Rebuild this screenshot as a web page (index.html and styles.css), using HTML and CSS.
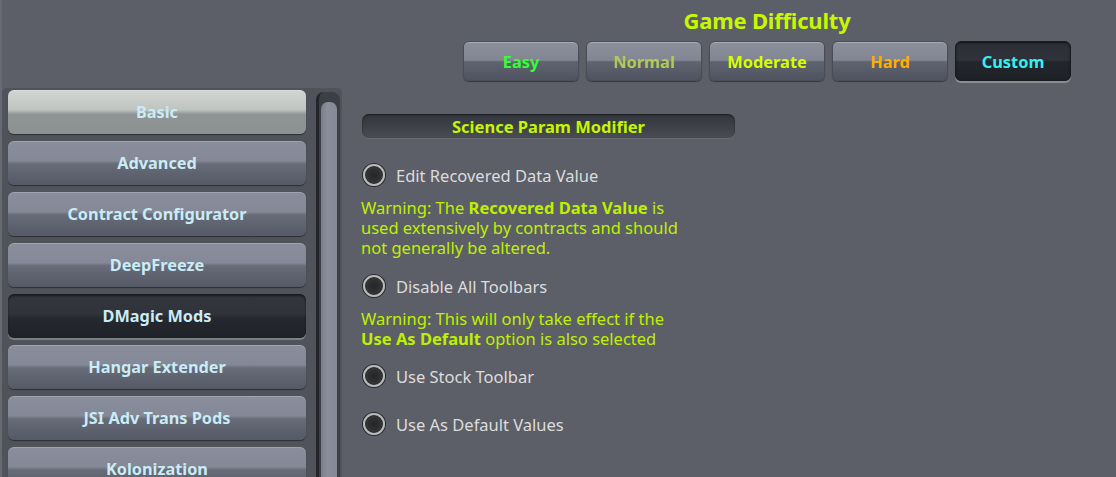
FILE: index.html
```html
<!DOCTYPE html>
<html>
<head>
<meta charset="utf-8">
<link rel="stylesheet" href="styles.css">
</head>
<body>
<div class="screen">
  <header class="difficulty">
    <h1 class="diff-title">Game Difficulty</h1>
    <div class="diff-buttons">
      <div class="diff-btn easy">Easy</div>
      <div class="diff-btn normal">Normal</div>
      <div class="diff-btn moderate">Moderate</div>
      <div class="diff-btn hard">Hard</div>
      <div class="diff-btn custom active">Custom</div>
    </div>
  </header>
  <div class="main">
    <aside class="list-panel">
      <div class="list">
        <div class="list-btn highlight">Basic</div>
        <div class="list-btn">Advanced</div>
        <div class="list-btn">Contract Configurator</div>
        <div class="list-btn">DeepFreeze</div>
        <div class="list-btn selected">DMagic Mods</div>
        <div class="list-btn">Hangar Extender</div>
        <div class="list-btn">JSI Adv Trans Pods</div>
        <div class="list-btn">Kolonization</div>
      </div>
      <div class="scroll-track"><div class="scroll-thumb"></div></div>
    </aside>
    <section class="content">
      <div class="section-bar">Science Param Modifier</div>
      <div class="option first"><span class="radio"></span><span class="opt-label">Edit Recovered Data Value</span></div>
      <p class="warning w1">Warning: The <b>Recovered Data Value</b> is<br>used extensively by contracts and should<br>not generally be altered.</p>
      <div class="option o2"><span class="radio"></span><span class="opt-label">Disable All Toolbars</span></div>
      <p class="warning w2">Warning: This will only take effect if the<br><b>Use As Default</b> option is also selected</p>
      <div class="option o3"><span class="radio"></span><span class="opt-label">Use Stock Toolbar</span></div>
      <div class="option o4"><span class="radio"></span><span class="opt-label">Use As Default Values</span></div>
    </section>
  </div>
</div>
</body>
</html>
```

FILE: styles.css
```css
html, body {
  margin: 0;
  padding: 0;
  background: #5c5f67;
  overflow: hidden;
}
.screen {
  width: 1116px;
  height: 477px;
  box-sizing: border-box;
  border-left: 2px solid #676a72;
  font-family: "Noto Sans", "Open Sans", sans-serif;
  display: flex;
  flex-direction: column;
}
.difficulty {
  align-self: flex-end;
  margin-right: 45px;
  padding-top: 8px;
  display: flex;
  flex-direction: column;
  align-items: center;
}
.diff-title {
  margin: 0;
  font-size: 22px;
  line-height: 24px;
  font-weight: 700;
  color: #c8f800;
  letter-spacing: -0.2px;
}
.diff-buttons {
  display: flex;
  gap: 7px;
  margin-top: 9px;
}
.diff-btn {
  width: 116px;
  height: 40px;
  box-sizing: border-box;
  border-radius: 6px;
  display: flex;
  align-items: center;
  justify-content: center;
  font-size: 16.4px;
  font-weight: 700;
  background: linear-gradient(to bottom, #8c909c 0%, #828693 48%, #60646f 52%, #4f5360 100%);
  border: 1px solid #4a4d55;
  box-shadow: inset 0 1px 0 rgba(255,255,255,0.25), 0 1px 1px rgba(0,0,0,0.4);
}
.diff-btn.easy { color: #33ff33; }
.diff-btn.normal { color: #b2c95a; }
.diff-btn.moderate { color: #d6ff00; }
.diff-btn.hard { color: #ffae00; }
.diff-btn.custom { color: #35f0f0; }
.diff-btn.active {
  background: linear-gradient(to bottom, #2c2f36 0%, #2f323a 48%, #23262c 52%, #1e2126 100%);
  border: 1px solid #1a1c20;
  box-shadow: 0 2px 0 #8a8d95, inset 0 1px 2px rgba(0,0,0,0.6);
}
.main {
  display: flex;
  margin-top: 7px;
  flex: 1;
  min-height: 0;
}
.list-panel {
  width: 340px;
  background: #50535a;
  border-radius: 5px 5px 0 0;
  display: flex;
  padding: 2px 2px 0 6px;
  box-sizing: border-box;
  overflow: hidden;
}
.list {
  width: 298px;
  display: flex;
  flex-direction: column;
  gap: 7px;
}
.list-btn {
  flex: none;
  height: 44px;
  box-sizing: border-box;
  border-radius: 6px;
  display: flex;
  align-items: center;
  justify-content: center;
  font-size: 16.3px;
  font-weight: 700;
  color: #c9ecf6;
  background: linear-gradient(to bottom, #8a8e9c 0%, #858997 45%, #686c79 52%, #555966 100%);
  box-shadow: inset 0 1px 0 rgba(255,255,255,0.2), 0 1px 1px rgba(0,0,0,0.45);
}
.list-btn.highlight {
  background: linear-gradient(to bottom, #d2d5d2 0%, #c0c4c1 45%, #8f9594 55%, #8c9292 100%);
  color: #c9ecf6;
}
.list-btn.selected {
  background: linear-gradient(to bottom, #33363d 0%, #30333a 45%, #25282e 55%, #1f2227 100%);
  box-shadow: inset 0 2px 2px rgba(0,0,0,0.5), 0 2px 0 #7c7f87;
}
.scroll-track {
  margin-left: 10px;
  margin-top: 2px;
  width: 24px;
  box-sizing: border-box;
  background: #3c3f46;
  border-radius: 8px 8px 0 0;
  border-left: 3px solid #23252a;
  padding: 10px 3px 0 2px;
}
.scroll-thumb {
  height: 100%;
  background: linear-gradient(to right, #7c808c, #8a8e9b 40%, #858997);
  border-radius: 7px 7px 0 0;
}
.content {
  margin-left: 19px;
  padding-top: 26px;
  display: flex;
  flex-direction: column;
  align-items: flex-start;
}
.section-bar {
  width: 373px;
  height: 24px;
  box-sizing: border-box;
  border-radius: 7px;
  background: linear-gradient(to bottom, #33363c, #3f4249 60%, #4a4d54);
  box-shadow: inset 0 1px 2px rgba(0,0,0,0.5), 0 1px 0 rgba(255,255,255,0.08);
  display: flex;
  align-items: center;
  justify-content: center;
  font-size: 16.5px;
  font-weight: 700;
  color: #c6f600;
  margin-left: 1px;
}
.option {
  display: flex;
  align-items: center;
  height: 24px;
  gap: 11px;
  margin-left: 2px;
}
.option.first { margin-top: 25px; }
.option.o2 { margin-top: 16px; }
.option.o3 { margin-top: 15px; }
.option.o4 { margin-top: 24px; }
.radio {
  width: 22px;
  height: 22px;
  box-sizing: border-box;
  border-radius: 50%;
  background: radial-gradient(circle at 50% 50%, #252628 0%, #2e2f31 45%, #3d3e40 70%, #4a4b4d 100%);
  border: 2px solid #b8b9bb;
  box-shadow: 0 0 0 1px #2a2b2e, inset 0 0 2px rgba(0,0,0,0.8);
}
.opt-label {
  font-size: 16.5px;
  color: #dcdcdc;
}
.warning {
  margin: 11px 0 0 0;
  font-size: 16.5px;
  line-height: 20px;
  color: #bff000;
}
.warning b { font-weight: 700; }
```
